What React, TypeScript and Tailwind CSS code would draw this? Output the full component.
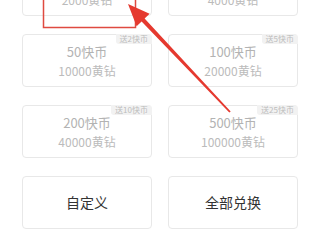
import React from 'react';

const packs = [
  { coin: '10快币', diamond: '2000黄钻', bonus: '' },
  { coin: '20快币', diamond: '4000黄钻', bonus: '' },
  { coin: '50快币', diamond: '10000黄钻', bonus: '送2快币' },
  { coin: '100快币', diamond: '20000黄钻', bonus: '送5快币' },
  { coin: '200快币', diamond: '40000黄钻', bonus: '送10快币' },
  { coin: '500快币', diamond: '100000黄钻', bonus: '送25快币' }];

function PackCard({ coin, diamond, bonus }: {coin: string;diamond: string;bonus: string;}) {
  return (
    <div className="relative h-[53px] border border-[#e8e8e8] rounded-[4px] flex flex-col items-center justify-center">
      {bonus &&
      <div className="absolute -top-px -right-px bg-[#f2f2f2] text-[#bdbdbd] text-[8px] leading-[10px] px-[4px] rounded-tr-[4px] rounded-bl-[3px]">
          {bonus}
        </div>
      }
      <p className="text-[13px] leading-[19px] text-[#b3b3b3]">{coin}</p>
      <p className="text-[12px] leading-[19px] text-[#bbbbbb]">{diamond}</p>
    </div>);

}

export default function App() {
  return (
    <div
      className="relative w-[320px] h-[240px] overflow-hidden bg-white"
      style={{ fontFamily: '"Noto Sans CJK SC", "Noto Sans", sans-serif' }}>
      
      <div className="grid grid-cols-2 gap-x-4 gap-y-[18px] px-[22px] mt-[-37px]">
        {packs.map((p) =>
        <PackCard key={p.coin} {...p} />
        )}
        <button className="h-[53px] border border-[#e8e8e8] rounded-[4px] text-[14px] text-[#333333]">
          自定义
        </button>
        <button className="h-[53px] border border-[#e8e8e8] rounded-[4px] text-[14px] text-[#333333]">
          全部兑换
        </button>
      </div>

      {/* annotation overlay */}
      <svg className="absolute inset-0 pointer-events-none" width="320" height="240" viewBox="0 0 320 240">
        <rect x="43.5" y="-10" width="92" height="37.5" fill="none" stroke="#df4a40" strokeWidth="1.5" />
        <polygon points="128,4 149.6,13.8 144.6,18.6 230.7,111.6 229.3,112.4 141.6,21.4 136.6,26.2" fill="#e5392f" />
      </svg>
    </div>);

}
